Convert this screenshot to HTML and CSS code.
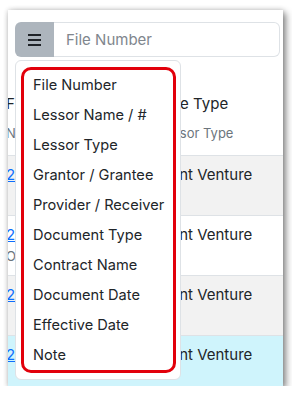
FILE: index.html
```html
<!DOCTYPE html>
<html>
<head>
<meta charset="utf-8">
<link rel="stylesheet" href="styles.css">
</head>
<body>
<div class="card">
  <div class="search">
    <div class="menu-btn">
      <svg width="13" height="12" viewBox="0 0 13 12"><path d="M0 1h13M0 6h13M0 11h13" stroke="#1f2328" stroke-width="2"/></svg>
    </div>
    <div class="field"><span class="placeholder">File Number</span></div>
  </div>
  <div class="table">
    <div class="row head">
      <div class="c1"><div class="t">File Number</div><div class="sub">Note</div></div>
      <div class="c2"><div class="t">Role Type</div><div class="sub">Lessor Type</div></div>
    </div>
    <div class="row alt">
      <div class="c1"><a class="t link" href="#">2023-0041</a></div>
      <div class="c2"><div class="t">Joint Venture</div></div>
    </div>
    <div class="row">
      <div class="c1"><a class="t link" href="#">2023-0042</a><div class="sub">Operating</div></div>
      <div class="c2"><div class="t">Joint Venture</div></div>
    </div>
    <div class="row alt">
      <div class="c1"><a class="t link" href="#">2023-0043</a></div>
      <div class="c2"><div class="t">Joint Venture</div></div>
    </div>
    <div class="row info">
      <div class="c1"><a class="t link" href="#">2023-0044</a></div>
      <div class="c2"><div class="t">Joint Venture</div></div>
    </div>
  </div>
  <div class="dropdown">
    <div class="highlight">
      <div class="item">File Number</div>
      <div class="item">Lessor Name / #</div>
      <div class="item">Lessor Type</div>
      <div class="item">Grantor / Grantee</div>
      <div class="item">Provider / Receiver</div>
      <div class="item">Document Type</div>
      <div class="item">Contract Name</div>
      <div class="item">Document Date</div>
      <div class="item">Effective Date</div>
      <div class="item">Note</div>
    </div>
  </div>
</div>
</body>
</html>
```
FILE: styles.css
```css
* { box-sizing: border-box; }
html, body { margin: 0; padding: 0; background: #ffffff; }
body {
  font-family: Inter, "Liberation Sans", sans-serif;
  font-size: 15px;
  color: #212529;
  padding: 10px 0 0 8px;
}
.card {
  position: relative;
  width: 275px;
  height: 376px;
  background: #fff;
  overflow: hidden;
  box-shadow: 3px 3px 7px rgba(0,0,0,0.45), 0 0 5px rgba(0,0,0,0.18);
}
.search {
  display: flex;
  height: 35px;
  margin: 12px 3px 0 7px;
}
.menu-btn {
  width: 39px;
  flex: none;
  background: #adb5bd;
  border-radius: 6px 0 0 6px;
  display: flex;
  align-items: center;
  justify-content: center;
}
.field {
  flex: 1;
  border: 1px solid #dee2e6;
  border-left: none;
  border-radius: 0 6px 6px 0;
  display: flex;
  align-items: center;
  padding-left: 12px;
}
.placeholder { color: #80868d; line-height: 22px; }
.row {
  display: grid;
  grid-template-columns: 150px 1fr;
  height: 60px;
  padding-top: 8px;
  border-bottom: 1px solid #dee2e6;
}
.row.head {
  height: 99px;
  padding-top: 36px;
}
.row.alt { background: #f2f2f2; }
.row.info { background: #cff4fc; border-bottom: none; }
.c1 { margin-left: -2px; white-space: nowrap; }
.c2 { white-space: nowrap; }
.t { display: block; line-height: 22px; color: #212529; }
.link { color: #0d6efd; text-decoration: underline; }
.sub { font-size: 13px; line-height: 20px; color: #6c757d; margin-top: 8px; }
.row:not(.head) .sub { margin-top: 0; }
.dropdown {
  position: absolute;
  left: 7px;
  top: 50px;
  width: 166px;
  height: 320px;
  background: #fff;
  border: 1px solid #dee2e6;
  border-radius: 6px;
  padding: 6px 4px 6px 5px;
}
.highlight {
  border: 3px solid #e2000b;
  border-radius: 10px;
  height: 306px;
}
.item {
  height: 30px;
  line-height: 30px;
  padding-left: 9px;
  font-size: 14.6px;
  white-space: nowrap;
}
```
